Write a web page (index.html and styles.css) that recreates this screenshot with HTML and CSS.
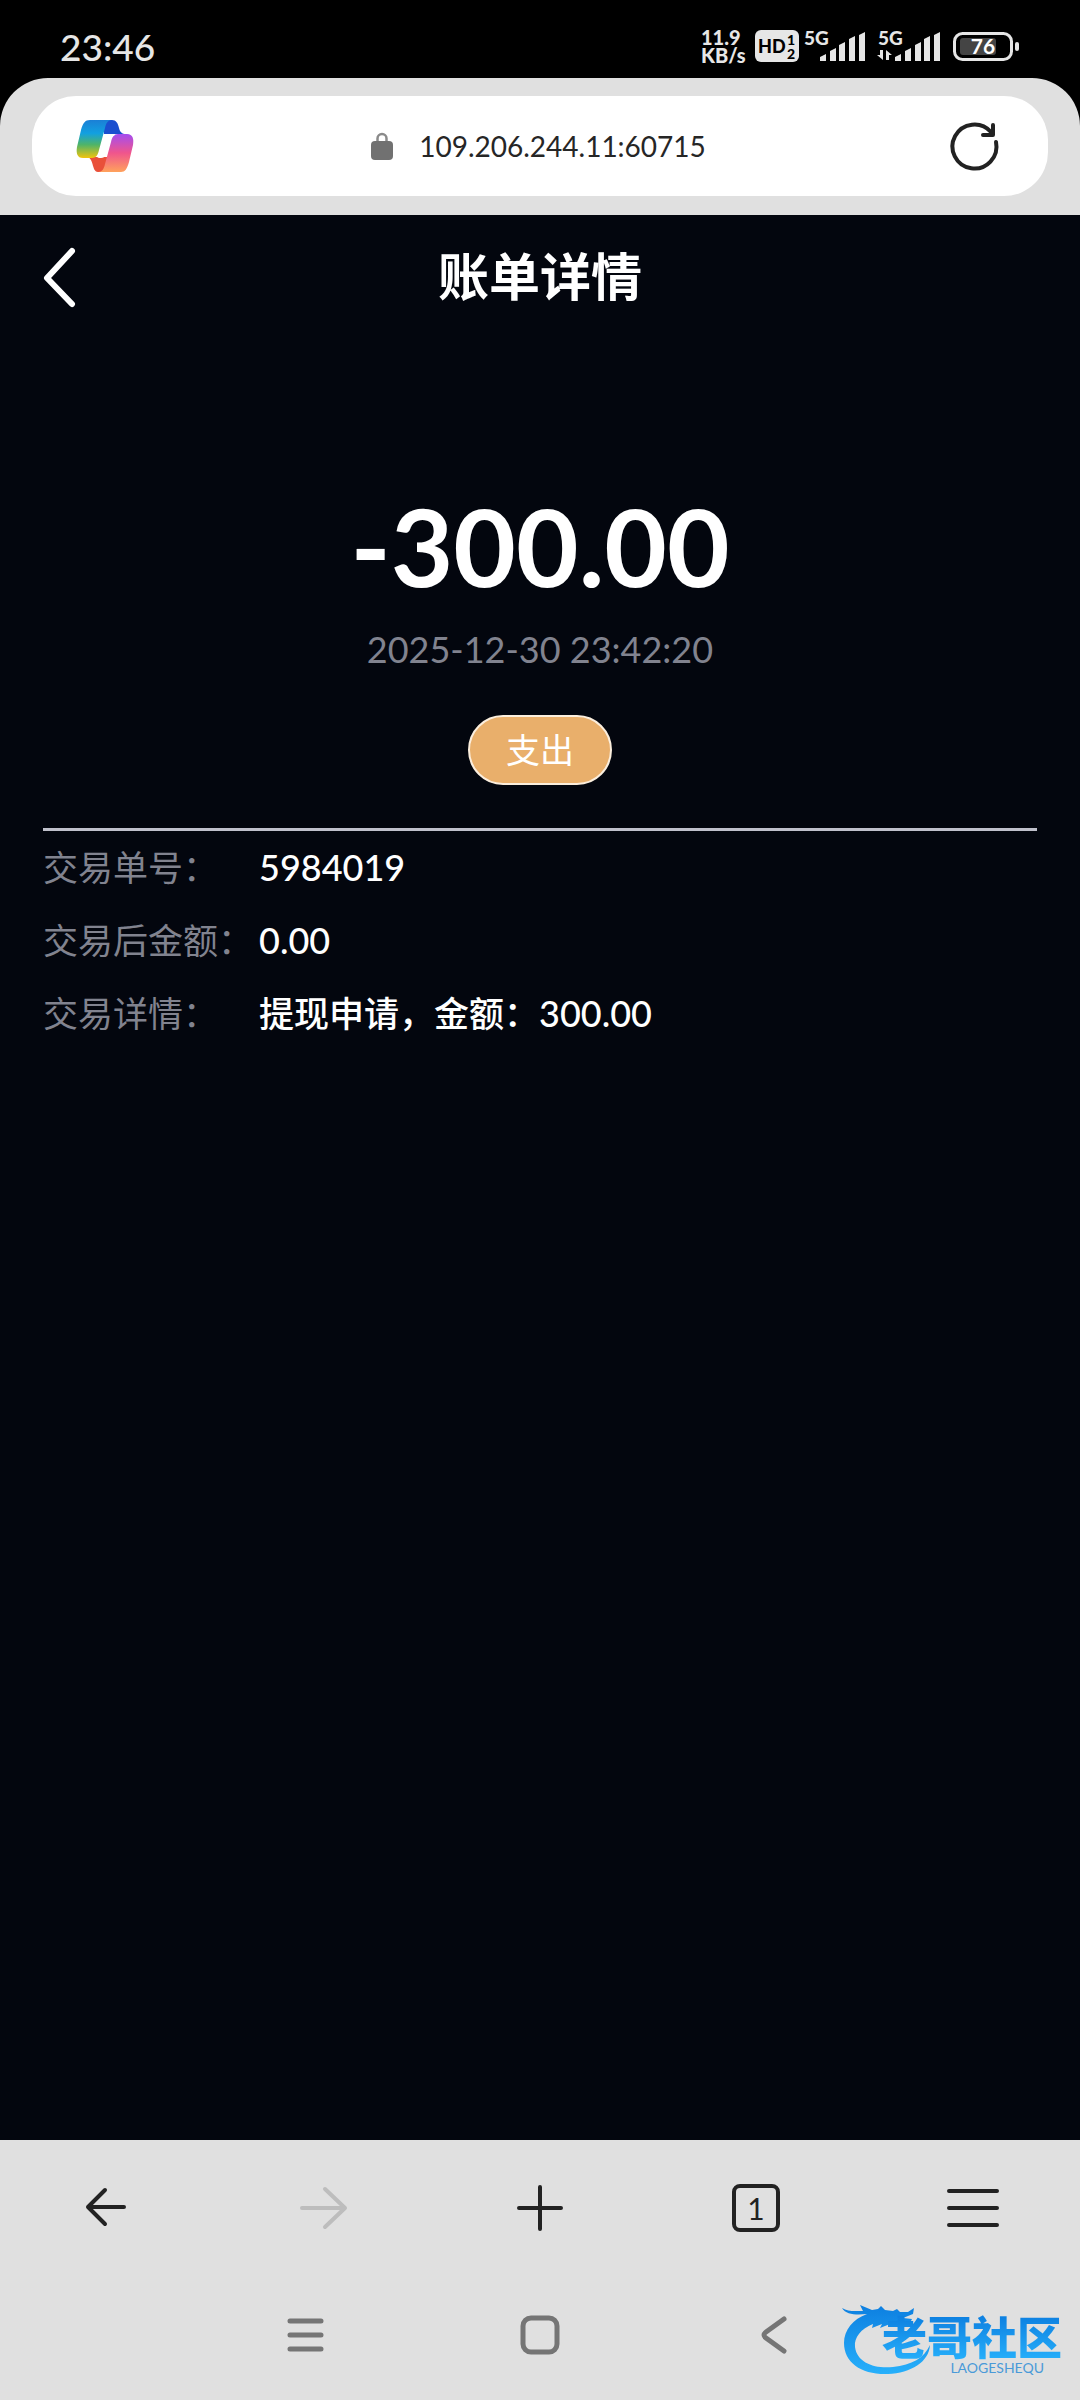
FILE: index.html
```html
<!DOCTYPE html>
<html lang="zh-CN">
<head>
  <meta charset="UTF-8">
  <meta name="viewport" content="width=device-width, initial-scale=1.0">
  <title>账单详情</title>
  <link rel="stylesheet" href="styles.css">
</head>
<body>
  <div class="status-bar">
    <span class="clock">23:46</span>
    <div class="status-icons">
      <div class="net-speed"><span>11.9</span><span>KB/s</span></div>
      <svg class="hd" width="44" height="32" viewBox="0 0 44 32">
        <rect width="44" height="32" rx="6" fill="#e6e6e6"/>
        <text x="3" y="23" font-size="18">HD</text>
        <text x="32" y="15" font-size="14">1</text>
        <text x="32" y="29" font-size="14">2</text>
      </svg>
      <svg class="signal" width="70" height="32" viewBox="0 0 70 32">
        <text x="1" y="15" font-size="19">5G</text>
        <path d="M17 31v-4l6-3v7zM27 31V21l6-3v13zM36 31V15l6-3v19zM46 31V9l6-3v25zM56 31V5l6-3v29z"/>
      </svg>
      <svg class="signal" width="66" height="32" viewBox="0 0 66 32">
        <text x="1" y="15" font-size="19">5G</text>
        <path d="M3 20h3v10L0 25h3zM9 30V20l6 5h-3v5z"/>
        <path d="M18 31v-4l6-3v7zM28 31V21l6-3v13zM38 31V15l6-3v19zM47 31V9l6-3v25zM57 31V5l6-3v29z"/>
      </svg>
      <svg class="battery" width="72" height="32" viewBox="0 0 72 32">
        <rect x="7.500" y="3.500" width="57" height="26" rx="8" fill="none" stroke="#e6e6e6" stroke-width="3"/>
        <rect x="13" y="8" width="36" height="17" rx="3" fill="#444"/>
        <rect x="68" y="12" width="4" height="9" rx="2" fill="#e6e6e6"/>
        <text x="36" y="24" font-size="21" text-anchor="middle">76</text>
      </svg>
    </div>
  </div>

  <div class="browser-bar">
    <div class="address">
      <svg width="58" height="54" viewBox="0 0 58 54">
        <defs>
          <linearGradient id="cool" x1="0" y1="0" x2="0" y2="1">
            <stop offset="0" stop-color="#1b7fd6"/>
            <stop offset="0.350" stop-color="#12a0e0"/>
            <stop offset="0.650" stop-color="#4fb468"/>
            <stop offset="1" stop-color="#f2c40c"/>
          </linearGradient>
          <linearGradient id="warm" x1="0" y1="0" x2="0" y2="1">
            <stop offset="0" stop-color="#a44df0"/>
            <stop offset="0.500" stop-color="#f0558c"/>
            <stop offset="1" stop-color="#ffa25c"/>
          </linearGradient>
        </defs>
        <path d="M28 1h8c4 0 6 3 7 8 1 4 3 6 7 6H28z" fill="#1b4fcf"/>
        <path d="M12 38h22l-6 15h-6c-6 0-4-12-10-15z" fill="#e9503a"/>
        <path d="M14 1h22c-4 0-6 3-7 8l-6 22c-1 5-3 8-7 8H7c-6 0-7-5-6-11l4-17C7 4 9 1 14 1z" fill="url(#cool)"/>
        <path d="M45 53H22c4 0 6-3 7-8l6-22c1-5 3-8 7-8h9c6 0 7 5 6 11l-4 17c-2 7-4 10-8 10z" fill="url(#warm)"/>
        <path d="M32 16h7c-3 1-4 4-5 7l-4 12c-1 3-3 4-5 4h-4c3-1 4-4 5-8l3-11c1-3 2-4 3-4z" fill="#fff"/>
      </svg>
      <div class="url">
        <svg width="22" height="28" viewBox="0 0 22 28">
          <path d="M6.500 10V6.500a4.500 4.500 0 0 1 9 0V10" fill="none" stroke="#8a8a8a" stroke-width="2.500"/>
          <rect y="9" width="22" height="19" rx="4" fill="#717171"/>
        </svg>
        <span>109.206.244.11:60715</span>
      </div>
      <button class="icon-btn" aria-label="刷新">
        <svg width="48" height="48" viewBox="0 0 48 48" fill="none" stroke="#222" stroke-width="4" stroke-linecap="round" stroke-linejoin="round">
          <path d="M45 20A22 22 0 1 1 40 10M42 3v10H32"/>
        </svg>
      </button>
    </div>
  </div>

  <main class="page">
    <header class="page-header">
      <a class="back" href="#" aria-label="返回">
        <svg width="34" height="60" viewBox="0 0 34 60" fill="none" stroke="#fff" stroke-width="6" stroke-linecap="round" stroke-linejoin="round">
          <path d="M29 4L4 31l25 26"/>
        </svg>
      </a>
      <h1>账单详情</h1>
    </header>
    <section class="summary">
      <div class="amount">-300.00</div>
      <div class="time">2025-12-30 23:42:20</div>
      <div class="tag">支出</div>
    </section>
    <dl class="details">
      <dt>交易单号：</dt>
      <dd><span class="num">5984019</span></dd>
      <dt>交易后金额：</dt>
      <dd><span class="num">0.00</span></dd>
      <dt>交易详情：</dt>
      <dd>提现申请，金额：<span class="num">300.00</span></dd>
    </dl>
  </main>

  <footer class="bottom">
    <nav class="toolbar">
      <button class="icon-btn" aria-label="后退">
        <svg width="48" height="48" viewBox="0 0 48 48"><path d="M40 23H4M21 6L4 23l17 17"/></svg>
      </button>
      <button class="icon-btn" aria-label="前进" disabled>
        <svg width="48" height="48" viewBox="0 0 48 48"><path d="M2 24h43M25 5l20 19-20 19"/></svg>
      </button>
      <button class="icon-btn" aria-label="新建标签页">
        <svg width="48" height="48" viewBox="0 0 48 48"><path d="M24 3v42M3 24h42"/></svg>
      </button>
      <button class="icon-btn tabs" aria-label="标签页">1</button>
      <button class="icon-btn" aria-label="菜单">
        <svg width="54" height="48" viewBox="0 0 54 48"><path d="M4 7h48M4 24h48M4 41h48"/></svg>
      </button>
    </nav>
    <nav class="system-nav">
      <button class="icon-btn" aria-label="最近任务">
        <svg width="40" height="40" viewBox="0 0 40 40"><path d="M4 6h31M4 20h31M4 34h31"/></svg>
      </button>
      <button class="icon-btn" aria-label="主屏幕">
        <svg width="40" height="40" viewBox="0 0 40 40"><rect x="3" y="3" width="34" height="34" rx="8"/></svg>
      </button>
      <button class="icon-btn" aria-label="返回上一页">
        <svg width="40" height="40" viewBox="0 0 40 40"><path d="M30 4L12 17q-4 3 0 6l18 13"/></svg>
      </button>
    </nav>
    <div class="watermark">
      <svg width="94" height="72" viewBox="0 0 94 72">
        <defs>
          <linearGradient id="blue" x1="0" y1="0" x2="0" y2="1">
            <stop offset="0" stop-color="#0d7fe0"/>
            <stop offset="1" stop-color="#27b0fb"/>
          </linearGradient>
        </defs>
        <path fill="url(#blue)" d="M0 5c6 4 13 3 21 3l-3-6 12 5 6-1 3-3 4 4 8 1 4-2 3 3h8l6-4-1 6-10 4 9 1-2 4-12-2-8 3-10 4 2-4-10 4 1-4C19 26 12 34 13 44c2 16 20 22 38 20 19-2 31-9 37-22-1 17-19 28-42 29C20 72 2 60 2 40 2 27 11 16 25 11 15 12 4 12 0 5z"/>
      </svg>
      <div class="watermark-text">
        <span class="watermark-name">老哥社区</span>
        <span class="watermark-latin">LAOGESHEQU</span>
      </div>
    </div>
  </footer>
</body>
</html>
```

FILE: styles.css
```css
* {
  box-sizing: border-box;
}
body {
  margin: 0;
  min-height: 100vh;
  display: flex;
  flex-direction: column;
  font-family: Lato, "Noto Sans CJK SC", sans-serif;
  background: #000;
  color: #fff;
}
svg {
  display: block;
  overflow: visible;
}
h1, dl, dd {
  margin: 0;
}
.icon-btn {
  display: flex;
  align-items: center;
  justify-content: center;
  padding: 0;
  border: none;
  background: none;
  font-family: inherit;
  cursor: pointer;
}

/* status bar */
.status-bar {
  height: 78px;
  padding: 14px 61px 0 60px;
  display: flex;
  align-items: center;
  justify-content: space-between;
  color: #e6e6e6;
}
.clock {
  font-size: 37px;
  font-weight: 500;
}
.status-icons {
  display: flex;
  align-items: center;
  gap: 4px;
}
.status-icons text {
  font-weight: 900;
}
.net-speed {
  width: 50px;
  display: flex;
  flex-direction: column;
  font-size: 20px;
  font-weight: 900;
  line-height: 18px;
}
.signal {
  fill: #e6e6e6;
}
.battery text {
  fill: #fff;
  font-weight: 700;
}

/* browser bar */
.browser-bar {
  padding: 18px 32px 19px;
  background: #e0e0e0;
  border-radius: 48px 48px 0 0;
}
.address {
  height: 100px;
  padding: 0 49px 0 44px;
  display: flex;
  align-items: center;
  justify-content: space-between;
  background: #fff;
  border-radius: 44px;
}
.url {
  padding-right: 8px;
  display: flex;
  align-items: center;
  gap: 26px;
  font-size: 28px;
  color: #262626;
}

/* bill page */
.page {
  flex: 1;
  padding: 0 43px;
  background: #03060e;
}
.page-header {
  height: 124px;
  display: grid;
  grid-template-columns: 34px 1fr 34px;
  align-items: center;
}
.page-header h1 {
  font-size: 51px;
  font-weight: 700;
  line-height: 60px;
  text-align: center;
}
.summary {
  padding: 144px 0 43px;
  display: flex;
  flex-direction: column;
  align-items: center;
  border-bottom: 3px solid #bfc0cb;
}
.amount {
  font-size: 108px;
  font-weight: 700;
  line-height: 124px;
}
.time {
  margin-top: 20px;
  font-size: 36px;
  line-height: 44px;
  color: #81838f;
}
.tag {
  margin-top: 44px;
  padding: 0 36px;
  font-size: 34px;
  line-height: 66px;
  background: #e9af6b;
  border: 2px solid #fbeedd;
  border-radius: 36px;
}
.details {
  display: grid;
  grid-template-columns: 216px 1fr;
  font-size: 35px;
  line-height: 73px;
}
.details dt {
  color: #81838f;
}
.details dd {
  font-weight: 500;
}
.num {
  font-size: 36px;
}

/* bottom bars */
.bottom {
  position: relative;
  background: #e0e0e0;
}
.toolbar {
  height: 134px;
  padding-top: 2px;
  display: grid;
  grid-template-columns: repeat(5, 1fr);
  align-items: center;
  justify-items: center;
}
.toolbar svg {
  fill: none;
  stroke: #222;
  stroke-width: 4;
  stroke-linecap: round;
  stroke-linejoin: round;
}
.toolbar button:disabled svg {
  stroke: #bdbdbd;
}
.tabs {
  width: 48px;
  height: 48px;
  border: 4px solid #222;
  border-radius: 8px;
  font-size: 30px;
  color: #222;
}
.system-nav {
  height: 126px;
  padding-bottom: 4px;
  display: flex;
  align-items: center;
  justify-content: center;
  gap: 194px;
}
.system-nav svg {
  fill: none;
  stroke: #757575;
  stroke-width: 5;
  stroke-linecap: round;
}
.watermark {
  position: absolute;
  right: 18px;
  bottom: 25px;
  display: flex;
  align-items: flex-end;
}
.watermark-text {
  margin-left: -54px;
  display: flex;
  flex-direction: column;
  align-items: flex-end;
}
.watermark-name {
  font-size: 45px;
  font-weight: 900;
  line-height: 46px;
  color: transparent;
  background: linear-gradient(#0d7fe0, #27b0fb);
  background-clip: text;
  -webkit-background-clip: text;
}
.watermark-latin {
  padding-right: 18px;
  font-size: 14px;
  line-height: 14px;
  color: #4a9ad8;
}
```
